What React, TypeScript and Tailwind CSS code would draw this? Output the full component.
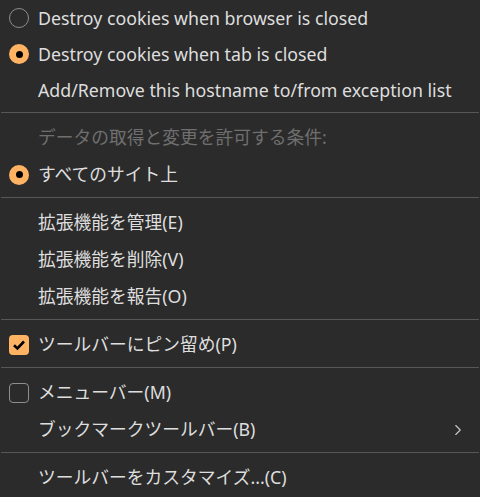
import { ChevronRight } from 'lucide-react';

type Mark = 'radio' | 'radio-on' | 'check' | 'check-on' | null;

const Indicator = ({ mark }: { mark: Mark }) => {
  if (mark === 'radio') {
    return <span className="block w-[20px] h-[20px] rounded-full border-[1.5px] border-[#8e8e8e]" />;
  }
  if (mark === 'radio-on') {
    return (
      <span className="flex w-[20px] h-[20px] rounded-full bg-[#ffb363] items-center justify-center">
        <span className="block w-[7px] h-[7px] rounded-full bg-black" />
      </span>
    );
  }
  if (mark === 'check') {
    return <span className="block w-[20px] h-[20px] rounded-[4px] border-[1.5px] border-[#8e8e8e]" />;
  }
  if (mark === 'check-on') {
    return (
      <span className="flex w-[20px] h-[20px] rounded-[4px] bg-[#ffb363] items-center justify-center">
        <svg width="14" height="14" viewBox="0 0 14 14">
          <path d="M2 7.2 L5.4 10.5 L12 3.5" fill="none" stroke="black" strokeWidth="2.6" />
        </svg>
      </span>
    );
  }
  return null;
};

const Item = ({
  label,
  mark = null,
  submenu = false,
  muted = false,
  h = 'h-[37px]',
}: {
  label: string;
  mark?: Mark;
  submenu?: boolean;
  muted?: boolean;
  h?: string;
}) => (
  <div className={`flex items-center ${h} pl-[9px] pr-[13px]`}>
    <div className="w-[29px] flex items-center">
      <Indicator mark={mark} />
    </div>
    <span className={`flex-1 whitespace-nowrap ${muted ? 'text-[#6f6f6f]' : 'text-[#dedede]'}`}>{label}</span>
    {submenu && <ChevronRight size={18} strokeWidth={1.5} className="text-[#c8c8c8]" />}
  </div>
);

const Sep = () => <div className="h-px bg-[#575757] mt-[4px] mb-[6px] mx-px" />;

export default function App() {
  return (
    <div
      className="w-[480px] h-[497px] overflow-hidden bg-[#2b2b2b] text-[17.75px]"
      style={{ fontFamily: '"Noto Sans", "Noto Sans CJK JP", sans-serif' }}
    >
      <Item h="h-[36px]" mark="radio" label="Destroy cookies when browser is closed" />
      <Item h="h-[36px]" mark="radio-on" label="Destroy cookies when tab is closed" />
      <Item h="h-[36px]" label="Add/Remove this hostname to/from exception list" />
      <Sep />
      <Item muted label="データの取得と変更を許可する条件:" />
      <Item mark="radio-on" label="すべてのサイト上" />
      <Sep />
      <Item label="拡張機能を管理(E)" />
      <Item label="拡張機能を削除(V)" />
      <Item label="拡張機能を報告(O)" />
      <Sep />
      <Item mark="check-on" label="ツールバーにピン留め(P)" />
      <Sep />
      <Item mark="check" label="メニューバー(M)" />
      <Item submenu label="ブックマークツールバー(B)" />
      <Sep />
      <Item label="ツールバーをカスタマイズ...(C)" />
    </div>
  );
}
